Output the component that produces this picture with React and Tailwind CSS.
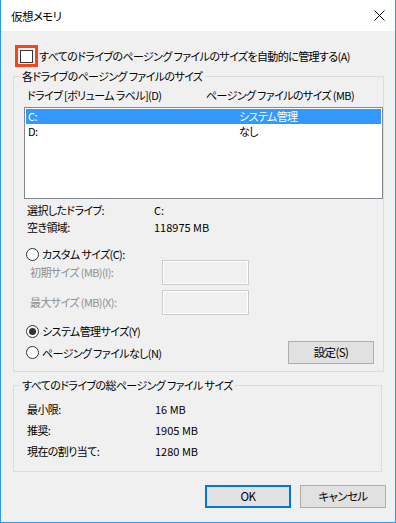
import React from "react";

const Radio = ({ checked }) => (
  <span className="w-[13px] h-[13px] rounded-full border border-[#333] bg-white flex items-center justify-center shrink-0">
    {checked && <span className="w-[7px] h-[7px] rounded-full bg-[#333]" />}
  </span>
);

const Btn = ({ children, primary }) => (
  <button
    className={
      primary
        ? "w-[86px] h-[23px] bg-[#e1e1e1] border-2 border-[#0078d7] text-[11.5px] text-black"
        : "w-[86px] h-[23px] bg-[#e1e1e1] border border-[#adadad] text-[11.5px] text-black tracking-[-0.6px]"
    }
  >
    {children}
  </button>
);

const App = () => {
  return (
    <div
      className="w-[396px] h-[523px] flex flex-col border-x border-b border-[#2a9bef] text-[11px] tracking-[-0.6px] text-black overflow-hidden whitespace-nowrap"
      style={{ fontFamily: '"Noto Sans CJK JP", "Noto Sans", sans-serif', fontFeatureSettings: '"palt"' }}
    >
      {/* title bar */}
      <div className="h-[31px] bg-white flex items-center justify-between pl-[10px] pr-[10px] shrink-0">
        <span className="leading-[16px] text-[11.5px]">仮想メモリ</span>
        <svg width="11" height="11" viewBox="0 0 11 11">
          <path d="M0.5 0.5 L10.5 10.5 M10.5 0.5 L0.5 10.5" stroke="#111" strokeWidth="1" />
        </svg>
      </div>

      <div className="flex-1 bg-[#f0f0f0] pl-[12px] pr-[13px] pt-[14px] flex flex-col">
        {/* auto manage */}
        <div className="flex items-center h-[22px]">
          <div className="ml-[2px] w-[23px] h-[22px] border-[3px] border-[#f2461c] flex items-center justify-center">
            <div className="w-[13px] h-[13px] border border-[#333] bg-white" />
          </div>
          <span className="ml-[1px] leading-[16px]">すべてのドライブのページング ファイルのサイズを自動的に管理する(A)</span>
        </div>

        {/* group 1 */}
        <fieldset className="mt-[1px] border border-[#dcdcdc] pb-[7px]">
          <legend className="ml-[6px] px-[2px] leading-[16px]">各ドライブのページング ファイルのサイズ</legend>
          <div className="mt-[3px] h-[16px] leading-[16px] flex pl-[13px]">
            <span className="w-[179px]">ドライブ [ボリューム ラベル](D)</span>
            <span>ページング ファイルのサイズ (MB)</span>
          </div>
          <div className="mt-[4px] ml-[10px] w-[359px] h-[92px] bg-white border border-[#828790] p-px">
            <div className="h-[15px] bg-[#3399ff] text-white flex items-center leading-[15px] pl-[2px]">
              <span className="w-[211px]">C:</span>
              <span>システム管理</span>
            </div>
            <div className="h-[15px] flex items-center leading-[15px] pl-[2px]">
              <span className="w-[211px]">D:</span>
              <span>なし</span>
            </div>
          </div>

          <div className="mt-[3px] pl-[13px]">
            <div className="h-[17px] leading-[17px] flex">
              <span className="w-[127px]">選択したドライブ:</span>
              <span className="tracking-normal">C:</span>
            </div>
            <div className="h-[17px] leading-[17px] flex">
              <span className="w-[127px]">空き領域:</span>
              <span className="tracking-normal">118975 MB</span>
            </div>
          </div>

          <div className="mt-[10px] pl-[12px] h-[16px] flex items-center gap-[3px]">
            <Radio />
            <span className="leading-[16px]">カスタム サイズ(C):</span>
          </div>
          <div className="mt-[-2px] pl-[16px] h-[25px] flex items-center">
            <span className="w-[132px] text-[#8f8f8f]">初期サイズ (MB)(I):</span>
            <div className="w-[87px] h-[25px] border border-[#cccccc] shadow-[inset_0_0_0_1px_#ffffff]" />
          </div>
          <div className="mt-[5px] pl-[16px] h-[25px] flex items-center">
            <span className="w-[132px] text-[#8f8f8f]">最大サイズ (MB)(X):</span>
            <div className="w-[87px] h-[25px] border border-[#cccccc] shadow-[inset_0_0_0_1px_#ffffff]" />
          </div>

          <div className="mt-[8px] pl-[12px] h-[16px] flex items-center gap-[3px]">
            <Radio checked />
            <span className="leading-[16px]">システム管理サイズ(Y)</span>
          </div>
          <div className="mt-[2px] pl-[12px] h-[23px] flex items-center">
            <Radio />
            <span className="ml-[3px] leading-[16px] flex-1">ページング ファイルなし(N)</span>
            <div className="mr-[9px]">
              <Btn>設定(S)</Btn>
            </div>
          </div>
        </fieldset>

        {/* group 2 */}
        <fieldset className="mt-[5px] border border-[#dcdcdc] pb-[9px]">
          <legend className="ml-[6px] px-[2px] leading-[16px]">すべてのドライブの総ページング ファイル サイズ</legend>
          <div className="mt-[6px] pl-[13px]">
            <div className="h-[21px] leading-[21px] flex">
              <span className="w-[128px]">最小限:</span>
              <span className="tracking-normal">16 MB</span>
            </div>
            <div className="h-[21px] leading-[21px] flex">
              <span className="w-[128px]">推奨:</span>
              <span className="tracking-normal">1905 MB</span>
            </div>
            <div className="h-[21px] leading-[21px] flex">
              <span className="w-[128px]">現在の割り当て:</span>
              <span className="tracking-normal">1280 MB</span>
            </div>
          </div>
        </fieldset>

        <div className="mt-[13px] flex justify-end gap-[9px] mr-[-4px]">
          <Btn primary>OK</Btn>
          <Btn>キャンセル</Btn>
        </div>
      </div>
    </div>
  );
};

export default App;
